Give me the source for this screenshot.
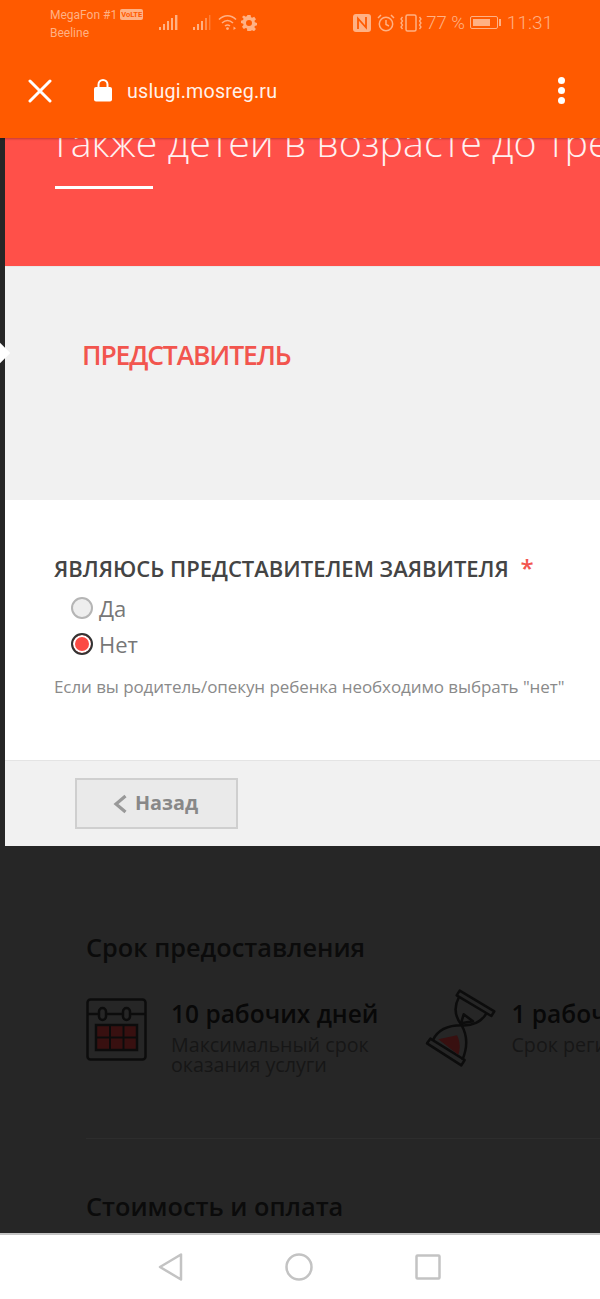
<div class="phone">
  <header class="top">
    <div class="status">
      <div class="carriers">
        <div class="c1">MegaFon #1 <span class="volte">VoLTE</span></div>
        <div class="c2">Beeline</div>
      </div>
      <svg class="sig1" width="20" height="18" viewBox="0 0 20 18" fill="#ffb184">
        <rect x="0" y="14" width="2" height="3"/><rect x="4" y="11" width="2" height="6"/><rect x="8" y="8" width="2" height="9"/><rect x="12" y="5" width="2" height="12"/><rect x="16" y="2" width="2.4" height="15"/>
      </svg>
      <svg class="sig2" width="20" height="18" viewBox="0 0 20 18" fill="#ffb184">
        <rect x="0" y="14" width="2" height="3"/><rect x="4" y="11" width="2" height="6"/><rect x="8" y="8" width="2" height="9"/><rect x="12" y="5" width="2" height="12" opacity=".6"/><rect x="16" y="2" width="1.4" height="15" opacity=".4"/>
      </svg>
      <svg class="wifi" width="20" height="18" viewBox="0 0 20 18" fill="none" stroke="#ffb184" stroke-width="1.6">
        <path d="M1 6.5C6 1.5 13 1.5 18 6.5M4 10C7.5 6.8 11.5 6.8 15 10M7 13C8.5 11.8 10.5 11.8 12 13"/>
        <circle cx="9.5" cy="15.6" r="1.4" fill="#ffb184" stroke="none"/>
        <path d="M15.5 13.5l2.5 1.8-2.5 1.8z" fill="#ffb184" stroke="none"/>
      </svg>
      <svg class="gear" width="16" height="16" viewBox="0 0 16 16">
        <path fill="#ffb184" fill-rule="evenodd" d="M6.4 0h3.2l.4 2.2 1.2.6 2-1 1.8 2.4-1.5 1.6.3 1.4 2.2.7v2.4l-2.200.7-.4 1.300 1.500 1.700-1.800 2.200-2-1-1.200.6-.4 2.100H6.400L6 13.600l-1.200-.6-2 1L1 11.800l1.500-1.700-.3-1.300L0 8.100V5.700l2.200-.7.3-1.400L1 2 2.800.5l2 1.200L6 1z M8 5a3 3 0 1 0 0 6 3 3 0 0 0 0-6z"/>
      </svg>
      <div class="spacer"></div>
      <svg class="nfc" width="18" height="18" viewBox="0 0 18 18">
        <rect width="18" height="18" rx="3" fill="#ffb184"/>
        <path d="M5 15V4.500l8 9V3" fill="none" stroke="#ff5a00" stroke-width="1.800"/>
      </svg>
      <svg class="alarm" width="18" height="18" viewBox="0 0 18 18" fill="none" stroke="#ffb184" stroke-width="1.500">
        <circle cx="9" cy="10" r="6.700"/><path d="M9 6v4.500l3 1.500M1 4l3-3M17 4l-3-3"/>
      </svg>
      <svg class="vib" width="22" height="18" viewBox="0 0 22 18" fill="none" stroke="#ffb184" stroke-width="1.300">
        <rect x="6" y="1" width="10" height="16" rx="1.500" stroke-width="1.500"/>
        <path d="M2.500 3l-1.500 2 1.500 2-1.500 2 1.500 2-1.500 2 1.500 2M19.500 3l1.500 2-1.500 2 1.500 2-1.500 2 1.500 2-1.500 2"/>
      </svg>
      <span class="pct">77 %</span>
      <div class="batt"><div class="battfill"></div></div>
      <div class="battcap"></div>
      <span class="time">11:31</span>
    </div>
    <div class="bar">
      <svg class="close" width="24" height="24" viewBox="0 0 24 24" stroke="#fff" stroke-width="3" stroke-linecap="round">
        <path d="M2 2l20 20M22 2L2 22"/>
      </svg>
      <svg class="lock" width="18" height="24" viewBox="0 0 18 24">
        <path d="M4.500 10V6.500a4.500 4.500 0 0 1 9 0V10" fill="none" stroke="#fff" stroke-width="2"/>
        <rect x="0" y="9" width="18" height="14.500" rx="2" fill="#fff"/>
      </svg>
      <span class="url">uslugi.mosreg.ru</span>
      <div class="spacer"></div>
      <div class="dots"><i></i><i></i><i></i></div>
    </div>
  </header>

  <main class="page">
    <section class="modal">
      <div class="hero">
        <div class="hero-text">Также детей в возрасте до трех лет</div>
        <div class="rule"></div>
      </div>
      <div class="band"><h2>ПРЕДСТАВИТЕЛЬ</h2></div>
      <div class="form">
        <div class="label">ЯВЛЯЮСЬ ПРЕДСТАВИТЕЛЕМ ЗАЯВИТЕЛЯ <span class="req">*</span></div>
        <div class="radios">
          <div class="radio"><span class="dot"></span>Да</div>
          <div class="radio"><span class="dot on"></span>Нет</div>
        </div>
        <div class="hint">Если вы родитель/опекун ребенка необходимо выбрать "нет"</div>
      </div>
      <div class="foot">
        <button class="back">
          <svg width="14" height="20" viewBox="0 0 14 20" fill="none" stroke="#999" stroke-width="3.200"><path d="M12.500 2L3 10l9.500 8"/></svg>
          <span>Назад</span>
        </button>
      </div>
    </section>
    <div class="notch"></div>

    <section class="under">
      <h3>Срок предоставления</h3>
      <div class="terms">
        <div class="term">
          <svg class="cal" width="62" height="64" viewBox="0 0 62 64" fill="none" stroke="#0c0c0c" stroke-width="2.500">
            <rect x="1.500" y="1.500" width="58" height="60" rx="3"/>
            <path d="M1.500 16H13M21 16H37M45 16H59.500"/>
            <rect x="13" y="10" width="7" height="12" rx="3.500"/>
            <rect x="37" y="10" width="7" height="12" rx="3.500"/>
            <rect x="10" y="27" width="41" height="25" fill="#381010"/>
            <path d="M24 27v25M37.500 27v25M10 39.500h41" stroke-width="2"/>
          </svg>
          <div class="tt">
            <div class="big">10 рабочих дней</div>
            <div class="small">Максимальный срок<br />оказания услуги</div>
          </div>
        </div>
        <div class="term second">
          <svg class="glass" width="76" height="84" viewBox="0 0 228 252" fill="none" stroke="#0c0c0c" stroke-width="7.500" stroke-linejoin="round">
            <path d="M110 14L214 76 205 90 101 28z"/>
            <path d="M22 158L125 222 115 238 12 172z"/>
            <path d="M108 33C92 62 96 92 116 118 88 118 48 124 30 162"/>
            <path d="M190 82C176 108 146 120 116 118 132 146 134 184 118 222"/>
            <path d="M122 85L150 106 114 112z"/>
            <path d="M46 160L102 148C112 168 112 190 106 206z" fill="#381010" stroke="none"/>
          </svg>
          <div class="tt">
            <div class="big">1 рабочий день</div>
            <div class="small">Срок регистрации</div>
          </div>
        </div>
      </div>
      <div class="sep"></div>
      <h3 class="h2">Стоимость и оплата</h3>
    </section>
  </main>

  <nav class="nav">
    <svg width="26" height="30" viewBox="0 0 26 30" fill="none" stroke="#c3c3c3" stroke-width="2.500" stroke-linejoin="round"><path d="M23 2.500V27.500L2 15z"/></svg>
    <svg width="30" height="30" viewBox="0 0 30 30" fill="none" stroke="#c3c3c3" stroke-width="2.500"><circle cx="15" cy="15" r="12.500"/></svg>
    <svg width="28" height="28" viewBox="0 0 28 28" fill="none" stroke="#c3c3c3" stroke-width="2.500" stroke-linejoin="round"><rect x="2.500" y="2.500" width="23" height="23" rx="1"/></svg>
  </nav>
</div>

<style>
  :global(body) { margin: 0; background: #262626; }
  .phone {
    width: 600px; height: 1299px; display: flex; flex-direction: column;
    overflow: hidden; font-family: "Open Sans", "Noto Sans", sans-serif;
  }
  .top { height: 138px; background: #ff5a00; flex: none; position: relative; z-index: 2; box-shadow: 0 1px 2px rgba(0,0,0,.25); }
  .status { height: 44px; display: flex; align-items: flex-start; color: #ffb184; font-family: Roboto, sans-serif; padding-top: 6px; box-sizing: border-box; }
  .carriers { margin-left: 50px; width: 108px; font-size: 12px; line-height: 18px; flex: none; }
  .volte { font-size: 7.500px; font-weight: 700; background: #ffb184; color: #ff5a00; border-radius: 2px; padding: 1px 1px; vertical-align: 2px; }
  .sig1 { margin-left: 1px; margin-top: 7px; }
  .sig2 { margin-left: 14px; margin-top: 7px; }
  .wifi { margin-left: 5px; margin-top: 7px; }
  .gear { margin-left: 3px; margin-top: 9px; }
  .spacer { flex: 1; }
  .nfc { margin-top: 8px; }
  .alarm { margin-left: 6px; margin-top: 8px; }
  .vib { margin-left: 5px; margin-top: 8px; }
  .pct { font-size: 18.500px; line-height: 24px; margin-left: 4px; margin-top: 5px; font-weight: 300; }
  .batt { width: 28px; height: 13px; margin-left: 5px; margin-top: 10px; border: 1px solid #ffb184; border-radius: 2px; padding: 2px; box-sizing: border-box; }
  .battfill { width: 77%; height: 100%; background: #ffb184; }
  .battcap { width: 2px; height: 7px; background: #ffb184; margin: 13px 0 0 1px; }
  .time { font-size: 19px; line-height: 24px; margin: 5px 47px 0 6px; font-weight: 300; }
  .bar { height: 94px; display: flex; align-items: center; box-sizing: border-box; }
  .close { margin-left: 28px; flex: none; margin-top: -1px; }
  .lock { margin-left: 42px; flex: none; margin-top: -2px; }
  .url { margin-left: 15px; color: #fff; opacity: .92; font-family: Roboto, sans-serif; font-size: 19.700px; letter-spacing: .2px; }
  .dots { display: flex; flex-direction: column; gap: 3px; margin-right: 35px; margin-top: -2px; }
  .dots i { width: 7px; height: 7px; border-radius: 50%; background: #fff; display: block; }

  .page { flex: 1; min-height: 0; background: #262626; position: relative; overflow: hidden; }
  .modal { margin-left: 5px; background: #f1f1f1; height: 708px; display: flex; flex-direction: column; overflow: hidden; }
  .hero { height: 128px; background: #ff5049; flex: none; overflow: hidden; border-bottom: 1px solid #e8e8e8; }
  .hero-text { font-size: 39.400px; font-weight: 300; color: #fff; white-space: nowrap; line-height: 52px; margin-top: -22px; margin-left: 45px; opacity: .92; }
  .rule { width: 98px; height: 3px; background: #fff; margin: 18px 0 0 50px; }
  .band { height: 233px; flex: none; box-sizing: border-box; padding: 70px 0 0 78px; }
  .band h2 { margin: 0 0 0 -1px; color: #f2554e; font-size: 26.500px; font-weight: 600; line-height: 36px; letter-spacing: -1.150px; }
  .form { height: 261px; flex: none; background: #fff; box-sizing: border-box; padding: 53px 0 0 49px; border-bottom: 1px solid #e4e4e4; }
  .label { font-size: 22px; line-height: 30px; font-weight: 600; color: #444; white-space: nowrap; }
  .req { color: #f2554e; font-size: 24px; margin-left: 6px; }
  .radios { margin: 7px 0 0 17px; }
  .radio { display: flex; align-items: center; height: 36px; font-size: 22px; color: #777; gap: 6px; }
  .dot { width: 22px; height: 22px; box-sizing: border-box; border-radius: 50%; border: 2px solid #b5b5b5; background: #eee; flex: none; }
  .dot.on { border-color: #333; background: #fb4a44; box-shadow: inset 0 0 0 2px #fff; }
  .hint { margin-top: 13px; font-size: 17px; line-height: 24px; color: #8a8a8a; white-space: nowrap; letter-spacing: -.08px; }
  .foot { flex: 1; background: #f1f1f1; padding: 17px 0 0 70px; }
  .back { width: 163px; height: 51px; display: flex; align-items: center; justify-content: center; gap: 8px; background: #eaeaea; border: 2px solid #cfcfcf; font-family: inherit; font-size: 19.800px; font-weight: 700; color: #888; padding: 0 0 2px; }
  .back svg { margin-left: -2px; margin-top: 2px; }
  .notch { position: absolute; left: -9px; top: 207px; width: 16px; height: 16px; background: #fff; transform: rotate(45deg); }

  .under { padding: 85px 0 0 86px; }
  h3 { margin: 0; color: #0b0b0b; font-size: 25.300px; font-weight: 600; line-height: 32px; white-space: nowrap; }
  .terms { display: flex; margin-top: 35px; white-space: nowrap; }
  .term { display: flex; flex: none; }
  .cal { flex: none; }
  .tt { margin-left: 23px; }
  .big { font-size: 24.500px; line-height: 30px; color: #080808; font-weight: 600; margin-top: 1px; }
  .small { font-size: 19.700px; line-height: 20px; color: #161616; margin-top: 6px; }
  .second { margin-left: 45px; margin-top: -12px; }
  .second .tt { margin-left: 12px; margin-top: 12px; }
  .sep { height: 1px; width: 520px; background: #2d2d2d; margin-top: 63px; }
  .h2 { margin-top: 51px; }

  .nav { height: 66px; flex: none; background: #fff; border-top: 2px solid #c4c4c4; box-sizing: border-box; display: flex; align-items: center; justify-content: center; gap: 100px; }
</style>
